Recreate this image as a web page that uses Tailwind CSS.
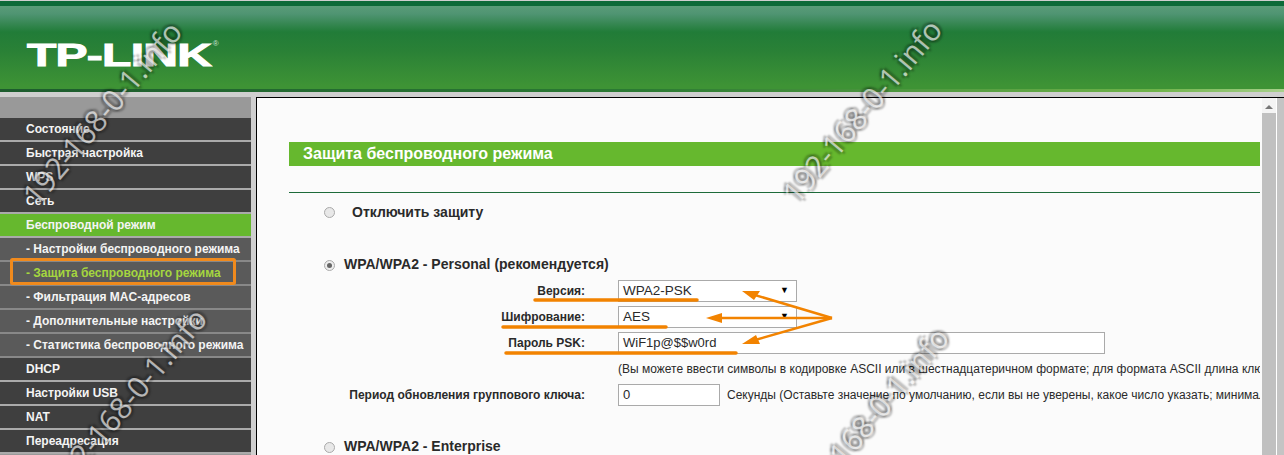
<!DOCTYPE html>
<html lang="en" class="overflow-hidden">
<head>
  <meta charset="UTF-8" />
  <title>TP-LINK</title>
  <script src="https://cdn.jsdelivr.net/npm/@tailwindcss/browser@4"></script>
</head>
<body class="relative h-[455px] w-[1284px] overflow-hidden bg-[#cfcfcf] font-['Liberation_Sans',sans-serif] text-[12px] text-[#2a2a2a]">
  <!-- Header -->
  <header class="mt-px h-[88px] border-t-[5px] border-[#0d6a38] bg-[linear-gradient(#5a9c78_0px,#4f9472_8px,#217c38_26px,#2a8136_45px,#3e9335_80px)] pl-[27px] pt-[33px]">
    <div class="flex items-start">
      <span class="origin-left scale-x-[1.5] text-[32px] leading-[32px] font-bold tracking-[-0.5px] text-white [-webkit-text-stroke:1px_white]">TP-LINK</span>
      <span class="ml-[63px] mt-[1px] text-[8px] leading-[8px] text-[#cde3d2]">®</span>
    </div>
  </header>
  <div class="h-[3px] bg-[linear-gradient(90deg,#1d5c2e,#2b7a33_50%,#6fb34a_90%,#a8d08c)]"></div>

  <div class="mt-[5px] flex h-[358px]">
    <!-- Sidebar -->
    <aside class="w-[251px] shrink-0 bg-[#999] pt-[21px] text-[12px] font-bold text-[#f4f4f4]">
      <div class="flex h-[24px] items-center border-b-2 border-[#aaa] bg-[#3f3f3f] pl-[26px]">Состояние</div>
      <div class="flex h-[24px] items-center border-b-2 border-[#aaa] bg-[#3f3f3f] pl-[26px]">Быстрая настройка</div>
      <div class="flex h-[24px] items-center border-b-2 border-[#aaa] bg-[#3f3f3f] pl-[26px]">WPS</div>
      <div class="flex h-[24px] items-center border-b-2 border-[#aaa] bg-[#3f3f3f] pl-[26px]">Сеть</div>
      <div class="flex h-[24px] items-center border-b-2 border-[#aaa] bg-[#66b82e] pl-[26px]">Беспроводной режим</div>
      <div class="flex h-[24px] items-center border-b-2 border-[#888] bg-[#5a5a5a] pl-[26px]">- Настройки беспроводного режима</div>
      <div class="flex h-[24px] items-center border-b-2 border-[#888] bg-[#5a5a5a] pl-[26px] text-[#a5d63f]">- Защита беспроводного режима</div>
      <div class="flex h-[24px] items-center border-b-2 border-[#888] bg-[#5a5a5a] pl-[26px]">- Фильтрация MAC-адресов</div>
      <div class="flex h-[24px] items-center border-b-2 border-[#888] bg-[#5a5a5a] pl-[26px]">- Дополнительные настройки</div>
      <div class="flex h-[24px] items-center border-b-2 border-[#888] bg-[#5a5a5a] pl-[26px]">- Статистика беспроводного режима</div>
      <div class="flex h-[24px] items-center border-b-2 border-[#aaa] bg-[#3f3f3f] pl-[26px]">DHCP</div>
      <div class="flex h-[24px] items-center border-b-2 border-[#aaa] bg-[#3f3f3f] pl-[26px]">Настройки USB</div>
      <div class="flex h-[24px] items-center border-b-2 border-[#aaa] bg-[#3f3f3f] pl-[26px]">NAT</div>
      <div class="flex h-[24px] items-center border-b-2 border-[#aaa] bg-[#3f3f3f] pl-[26px]">Переадресация</div>
    </aside>

    <!-- Content frame -->
    <main class="ml-[5px] flex flex-1 border-t border-l border-black bg-[#fbfbfb]">
      <div class="w-[1003px] shrink-0 overflow-hidden pl-[32px] pt-[44px]">
        <h1 class="flex h-[24px] items-center bg-[#66b82e] pl-[14px] text-[16px] font-bold text-white">Защита беспроводного режима</h1>
        <div class="mt-[26px] h-px bg-[#1d6b3a]"></div>

        <div class="mt-[11px] flex h-[16px] items-center pl-[35px] text-[14px] font-bold">
          <span class="h-[11px] w-[11px] rounded-full border border-[#aaa] bg-[#e8e8e8]"></span>
          <span class="ml-[17px]">Отключить защиту</span>
        </div>

        <div class="mt-[36px] flex h-[16px] items-center pl-[35px] text-[14px] font-bold">
          <span class="mt-[3px] flex h-[11px] w-[11px] items-center justify-center rounded-full border border-[#aaa] bg-[#eee]"><span class="h-[5px] w-[5px] rounded-full bg-[#666]"></span></span>
          <span class="ml-[9px]">WPA/WPA2 - Personal (рекомендуется)</span>
        </div>

        <div class="mt-[8px] flex h-[22px] items-center">
          <span class="w-[296px] text-right font-bold">Версия:</span>
          <div class="ml-[33px] flex h-[22px] w-[179px] items-center justify-between border border-[#aaa] bg-white pl-[4px] pr-[7px] text-[13.5px]">WPA2-PSK<span class="text-[9px] text-black">▼</span></div>
        </div>
        <div class="mt-[4px] flex h-[22px] items-center">
          <span class="w-[296px] text-right font-bold">Шифрование:</span>
          <div class="ml-[33px] flex h-[22px] w-[179px] items-center justify-between border border-[#aaa] bg-white pl-[4px] pr-[7px] text-[13.5px]">AES<span class="text-[9px] text-black">▼</span></div>
        </div>
        <div class="mt-[4px] flex h-[22px] items-center">
          <span class="w-[296px] text-right font-bold">Пароль PSK:</span>
          <div class="ml-[33px] flex h-[22px] w-[487px] items-center border border-[#aaa] bg-white pl-[4px] text-[13px]">WiF1p@$$w0rd</div>
        </div>
        <div class="mt-[7px] flex h-[16px] items-center whitespace-nowrap pl-[329px]">(Вы можете ввести символы в кодировке ASCII или в шестнадцатеричном формате; для формата ASCII длина ключа</div>

        <div class="mt-[7px] flex h-[22px] items-center whitespace-nowrap">
          <span class="w-[296px] shrink-0 text-right font-bold">Период обновления группового ключа:</span>
          <div class="ml-[33px] flex h-[22px] w-[102px] shrink-0 items-center border border-[#aaa] bg-white pl-[4px] text-[13px]">0</div>
          <span class="ml-[7px]">Секунды (Оставьте значение по умолчанию, если вы не уверены, какое число указать; минимальное</span>
        </div>

        <div class="mt-[32px] flex h-[16px] items-center pl-[35px] text-[14px] font-bold">
          <span class="mt-[3px] h-[11px] w-[11px] rounded-full border border-[#aaa] bg-[#e8e8e8]"></span>
          <span class="ml-[9px]">WPA/WPA2 - Enterprise</span>
        </div>
      </div>

      <!-- Scrollbar -->
      <div class="ml-[2px] flex w-[14px] shrink-0 flex-col items-center bg-[#f4f4f4]">
        <span class="mt-[7px] h-0 w-0 border-x-[4px] border-b-[4px] border-x-transparent border-b-[#777]"></span>
        <div class="mt-[4px] w-full flex-1 bg-[#c0c0c0]"></div>
      </div>
      <div class="w-[1px] bg-white"></div>
      <div class="flex-1 bg-[#c4c4c4]"></div>
    </main>
  </div>

  <!-- Orange annotations -->
  <svg class="absolute left-0 top-0" width="1284" height="455" fill="none">
    <rect x="11.5" y="259.5" width="223" height="24" stroke="#f08a1d" stroke-width="3" rx="1" />
    <g stroke="#f28300" stroke-width="3.5" stroke-linecap="round">
      <path d="M535 300H697" />
      <path d="M503 327H666" />
      <path d="M506 353H736" />
    </g>
    <g stroke="#f28300" stroke-width="2.500">
      <path d="M832 318L748 293" />
      <path d="M832 318L714 318" />
      <path d="M832 318L748 342" />
    </g>
    <g fill="#f28300">
      <path d="M742 291L760 291L754 300Z" />
      <path d="M706 318L722 313L722 323Z" />
      <path d="M742 344L756 335L760 344Z" />
    </g>
  </svg>

  <!-- Watermarks -->
  <div class="pointer-events-none absolute left-[-12px] top-[98px] -rotate-[50deg] whitespace-nowrap font-['Open_Sans',sans-serif] text-[30px] leading-none text-white/65 [text-shadow:3px_0_2px_#0004,-3px_0_2px_#0004,0_3px_2px_#0004,0_-3px_2px_#0004]">192-168-0-1.info</div>
  <div class="pointer-events-none absolute left-[748px] top-[96px] -rotate-[50deg] whitespace-nowrap font-['Open_Sans',sans-serif] text-[30px] leading-none text-white/65 [text-shadow:3px_0_2px_#0004,-3px_0_2px_#0004,0_3px_2px_#0004,0_-3px_2px_#0004]">192-168-0-1.info</div>
  <div class="pointer-events-none absolute left-[13px] top-[385px] -rotate-[50deg] whitespace-nowrap font-['Open_Sans',sans-serif] text-[30px] leading-none text-white/65 [text-shadow:3px_0_2px_#0004,-3px_0_2px_#0004,0_3px_2px_#0004,0_-3px_2px_#0004]">192-168-0-1.info</div>
  <div class="pointer-events-none absolute left-[755px] top-[404px] -rotate-[50deg] whitespace-nowrap font-['Open_Sans',sans-serif] text-[30px] leading-none text-white/65 [text-shadow:3px_0_2px_#0004,-3px_0_2px_#0004,0_3px_2px_#0004,0_-3px_2px_#0004]">192-168-0-1.info</div>
</body>
</html>
